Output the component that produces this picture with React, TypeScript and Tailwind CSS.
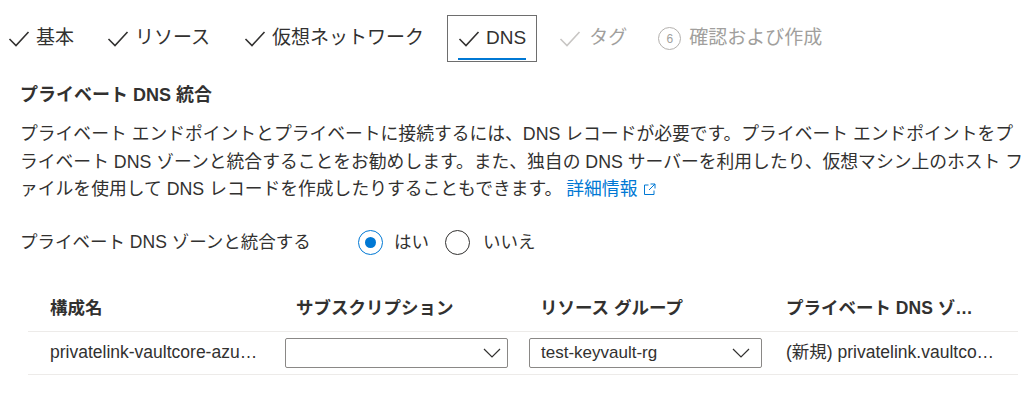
import React from 'react';

const Check = ({ className = '' }: { className?: string }) => (
  <svg width="22" height="18" viewBox="0 0 22 18" className={className} fill="none">
    <polyline points="1.5,9 8,15.5 20.5,2" stroke="currentColor" strokeWidth="1.6" strokeLinejoin="miter" />
  </svg>
);

const Chevron = () => (
  <svg width="18" height="10" viewBox="0 0 18 10" fill="none" className="text-[#323130]">
    <polyline points="1,1 9,9 17,1" stroke="currentColor" strokeWidth="1.2" />
  </svg>
);

const ExternalLink = () => (
  <svg width="13" height="13" viewBox="0 0 13 13" fill="none" className="inline-block ml-[6px] -mt-[2px] align-middle">
    <path d="M5.5 2H1.5V11.5H11V7.5" stroke="currentColor" strokeWidth="1" />
    <path d="M7.5 1H12V5.5M12 1L6 7" stroke="currentColor" strokeWidth="1" />
  </svg>
);

const tabs = [
  { label: '基本', gap: 'mr-[33px]' },
  { label: 'リソース', gap: 'mr-[34px]' },
  { label: '仮想ネットワーク', gap: 'mr-[23px]' },
];

export default function App() {
  return (
    <div
      className="w-[1024px] h-[409px] bg-white text-[#323130] overflow-hidden"
      style={{ fontFamily: '"Liberation Sans", "Noto Sans CJK JP", sans-serif' }}
    >
      {/* wizard tabs */}
      <div className="flex items-center pt-[15px] pl-[8px] h-[62px]">
        {tabs.map((t) => (
          <div key={t.label} className={`flex items-center gap-[6px] text-[19px] h-[47px] ${t.gap}`}>
            <Check />
            <span>{t.label}</span>
          </div>
        ))}
        <div className="relative flex items-center gap-[6px] text-[19px] h-[47px] px-[10px] border border-[#6e6e6e] mr-[22px]">
          <Check />
          <span>DNS</span>
          <div className="absolute left-[10px] right-[10px] bottom-[1px] h-[2px] bg-[#0078d4]" />
        </div>
        <div className="flex items-center gap-[8px] text-[19px] h-[47px] text-[#a19f9d] mr-[31px]">
          <Check className="text-[#c8c6c4]" />
          <span>タグ</span>
        </div>
        <div className="flex items-center gap-[8px] text-[19px] h-[47px] text-[#a19f9d]">
          <span className="w-[23px] h-[23px] rounded-full border border-[#b3b0ad] flex items-center justify-center text-[12px]">6</span>
          <span>確認および作成</span>
        </div>
      </div>

      <div className="px-[20px]">
        <h2 className="mt-[21px] text-[18px] leading-[24px] font-bold">プライベート DNS 統合</h2>
        <p className="mt-[14px] text-[17.8px] leading-[27.5px] whitespace-nowrap">
          プライベート エンドポイントとプライベートに接続するには、DNS レコードが必要です。プライベート エンドポイントをプ
          <br />
          ライベート DNS ゾーンと統合することをお勧めします。また、独自の DNS サーバーを利用したり、仮想マシン上のホスト フ
          <br />
          ァイルを使用して DNS レコードを作成したりすることもできます。
          <a className="ml-[4px] text-[#0078d4]">
            詳細情報
            <ExternalLink />
          </a>
        </p>

        <div className="mt-[24px] flex items-center h-[30px] text-[17.5px]">
          <span className="w-[338px]">プライベート DNS ゾーンと統合する</span>
          <label className="flex items-center gap-[11px] mr-[16px]">
            <span className="w-[25px] h-[25px] rounded-full border-[1.5px] border-[#0078d4] flex items-center justify-center">
              <span className="w-[11px] h-[11px] rounded-full bg-[#0078d4]" />
            </span>
            <span>はい</span>
          </label>
          <label className="flex items-center gap-[13px]">
            <span className="w-[25px] h-[25px] rounded-full border-[1.5px] border-[#323130]" />
            <span>いいえ</span>
          </label>
        </div>
      </div>

      {/* table */}
      <div className="ml-[28px] w-[990px] mt-[28px] text-[17.5px]">
        <div className="flex items-center h-[46px] font-bold border-b border-[#edebe9]">
          <div className="w-[257px] pl-[22px]">構成名</div>
          <div className="w-[244px] pl-[11px]">サブスクリプション</div>
          <div className="w-[246px] pl-[11px]">リソース グループ</div>
          <div className="flex-1 pl-[11px] truncate">プライベート DNS ゾ…</div>
        </div>
        <div className="flex items-center h-[43px] border-b border-[#edebe9]">
          <div className="w-[257px] pl-[22px]">
            <div className="w-[225px] truncate">privatelink-vaultcore-azu…</div>
          </div>
          <div className="w-[244px]">
            <div className="w-[223px] h-[30px] border border-[#8a8886] rounded-[2px] flex items-center justify-end pr-[6px]">
              <Chevron />
            </div>
          </div>
          <div className="w-[246px]">
            <div className="w-[233px] h-[30px] border border-[#8a8886] rounded-[2px] flex items-center justify-between pl-[11px] pr-[11px]">
              <span className="text-[17px]">test-keyvault-rg</span>
              <Chevron />
            </div>
          </div>
          <div className="flex-1 pl-[11px] truncate">(新規) privatelink.vaultco…</div>
        </div>
      </div>
    </div>
  );
}
